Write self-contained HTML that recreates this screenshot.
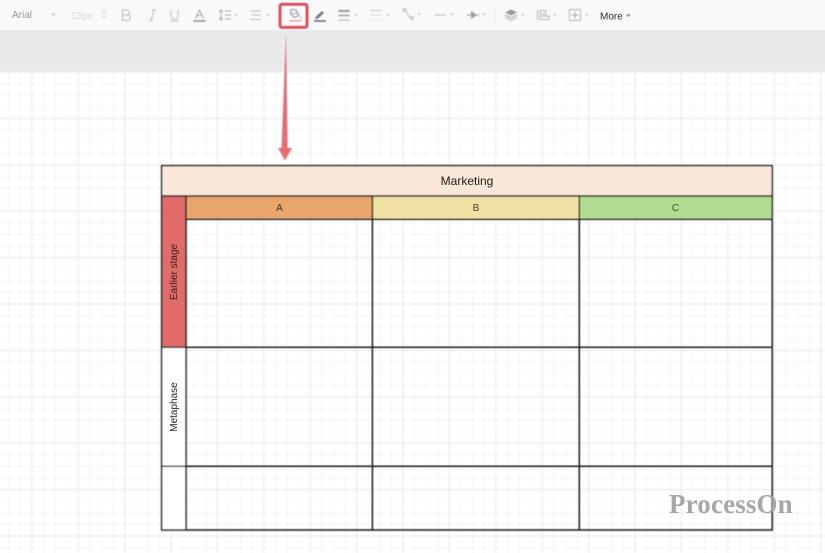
<!DOCTYPE html>
<html><head><meta charset="utf-8">
<style>
html,body{margin:0;padding:0;width:825px;height:553px;overflow:hidden;background:#fff;font-family:"Liberation Sans",sans-serif}
svg{position:absolute;left:0;top:0;display:block}
</style></head>
<body>
<svg width="825" height="553" viewBox="0 0 825 553" xmlns="http://www.w3.org/2000/svg">
<defs>
<pattern id="g" x="8.3" y="2" width="11.6" height="11.6" patternUnits="userSpaceOnUse">
<path d="M.5 0V11.6M0 .5H11.6" stroke="#f3f4f5" stroke-width="1" fill="none"/>
</pattern>
<pattern id="G" x="31.3" y="71.4" width="46.4" height="46.4" patternUnits="userSpaceOnUse">
<path d="M.5 0V46.4M0 .5H46.4" stroke="#ebecee" stroke-width="1.200" fill="none"/>
</pattern>
<filter id="b"><feGaussianBlur stdDeviation="0.4"/></filter>
<filter id="t"><feGaussianBlur stdDeviation="0.2"/></filter>
</defs>
<rect width="825" height="553" fill="#fff"/>
<g filter="url(#b)">
<rect y="71" width="825" height="482" fill="url(#g)"/>
<rect y="71" width="825" height="482" fill="url(#G)"/>
</g>
<rect y="30" width="825" height="41.500" fill="#e8e9eb"/>
<rect width="825" height="30" fill="#f8f9fa"/>
<path d="M0 30.300H825" stroke="#eceded" stroke-width="1"/>

<g filter="url(#b)">
<!-- toolbar icons -->
<path d="M51 13.500l2.500 2.500 2.500-2.500z" fill="#c4c6c8"/>
<path d="M102 12.500l2 -2 2 2zM102 15.500l2 2 2-2z" fill="#c6c8ca"/>
<path d="M122.500 10h4.500a2.500 2.500 0 0 1 0 5h-4.500zM122.500 15h5a2.700 2.700 0 0 1 0 5.400h-5z" fill="none" stroke="#b8babc" stroke-width="1.100"/>
<path d="M149 20.500h4M151 20.500l3-10.500M152 10h4" fill="none" stroke="#b8babc" stroke-width="1"/>
<path d="M171 10v6a3.500 3.500 0 0 0 7 0v-6M170 21h9" stroke="#bcbec0" stroke-width="1" fill="none"/>
<path d="M195.500 18.500l4-8.500 4 8.500M197 15.500h5" fill="none" stroke="#a2a5a7" stroke-width="1"/>
<path d="M193.500 21h12" stroke="#77797c" stroke-width="1.300"/>
<!-- line height -->
<path d="M221 10v10M219 12l2-2 2 2M219 18l2 2 2-2M225 11h6M225 15h6M225 19h6" stroke="#a9acae" stroke-width="1" fill="none"/>
<path d="M233.500 14l2 2 2-2z" fill="#c6c8ca"/>
<!-- align -->
<path d="M250 11h11M252 15h8M250 19.500h11" stroke="#b5b7b9" stroke-width="1" fill="none"/>
<path d="M266 14l2 2 2-2z" fill="#c6c8ca"/>
<!-- fill bucket -->
<path d="M291 9.500l5 .5 3 5.500-4.500 2-4-4z" stroke="#8b8e91" stroke-width="1" fill="#f4f4f4"/>
<path d="M290.500 13.500h8" stroke="#9a9da0" stroke-width=".8"/>
<circle cx="300.500" cy="17.500" r=".8" fill="#8b8e91"/>
<path d="M289.500 20.800h12" stroke="#e58a93" stroke-width="1.200"/>
<rect x="280" y="4.300" width="27" height="23" rx="1.500" fill="none" stroke="#dc4a58" stroke-width="2.800"/>
<!-- pen -->
<path d="M316 16.500l6-5.500 2 2-6 5.500-2.800.8z" fill="#75787b"/>
<path d="M314 21h12" stroke="#6d7073" stroke-width="1.600"/>
<!-- line width -->
<path d="M338.500 11h11" stroke="#8a8d90" stroke-width="1.800"/>
<path d="M338.500 15.500h11" stroke="#989b9d" stroke-width="1.400"/>
<path d="M338.500 20h11" stroke="#aeb0b2" stroke-width="1"/>
<path d="M354 14l2 2 2-2z" fill="#c0c2c4"/>
<!-- dash -->
<path d="M370 10.500h12" stroke="#c3c5c7" stroke-width="1"/>
<path d="M370 15h12" stroke="#c3c5c7" stroke-width="1" stroke-dasharray="2 1"/>
<path d="M370 19.500h12" stroke="#d0d2d3" stroke-width="1" stroke-dasharray="1 1"/>
<path d="M386 14l2 2 2-2z" fill="#c6c8ca"/>
<!-- connector -->
<circle cx="404.500" cy="10" r="1.500" fill="none" stroke="#b4b6b8"/>
<circle cx="412" cy="18" r="1.500" fill="none" stroke="#b4b6b8"/>
<path d="M405.500 11.500c1.500 2 2.500 1.500 2.500 3.500s1.500 1.500 2.500 2" stroke="#b4b6b8" fill="none"/>
<path d="M417 13l2 2 2-2z" fill="#c6c8ca"/>
<!-- line -->
<path d="M435 15h11" stroke="#bcbec0" stroke-width="1.200"/>
<path d="M450 13.500l2 2 2-2z" fill="#c6c8ca"/>
<!-- arrow -->
<path d="M467 15h4" stroke="#a0a3a5" stroke-width="1.200"/>
<path d="M471 11l6 4-6 4z" fill="#9a9da0"/>
<path d="M477 15h2" stroke="#a0a3a5" stroke-width="1.200"/>
<path d="M482 13.500l2 2 2-2z" fill="#c6c8ca"/>
<path d="M494.500 9v14" stroke="#e4e5e6"/>
<!-- layers -->
<path d="M511 9.500l6 3-6 3-6-3z" fill="#93969a"/>
<path d="M505 15l6 3 6-3" stroke="#a8abad" stroke-width="1.200" fill="none"/>
<path d="M505 17.500l6 3 6-3" stroke="#bcbec0" stroke-width="1.200" fill="none"/>
<path d="M521 14l2 2 2-2z" fill="#c6c8ca"/>
<!-- align objects -->
<path d="M537.500 9.500v11" stroke="#b5b7b9" stroke-width="1"/>
<rect x="540" y="10.500" width="6" height="3.500" fill="none" stroke="#b5b7b9"/>
<rect x="540" y="16" width="9" height="3.500" fill="none" stroke="#b5b7b9"/>
<path d="M553 14l2 2 2-2z" fill="#c6c8ca"/>
<!-- grid -->
<rect x="569.500" y="9.500" width="11" height="11" rx="1" fill="none" stroke="#adb0b2"/>
<path d="M575 11.500v7M571.500 15h7" stroke="#a5a8aa"/>
<path d="M585 14l2 2 2-2z" fill="#c6c8ca"/>
<path d="M626 14.500l2.300 2.300 2.300-2.300z" fill="#65686b"/>

<!-- red arrow -->
<path d="M286 33L287.500 148H292L285 160.500 278 148H281.500z" fill="#ec6772"/>

<!-- table fills -->
<rect x="162" y="166" width="610" height="30" fill="#fae7da"/>
<rect x="186" y="196" width="186" height="23" fill="#e9a66c"/>
<rect x="372" y="196" width="207" height="23" fill="#f0e1a4"/>
<rect x="579" y="196" width="193" height="23" fill="#b1dc92"/>
<rect x="162" y="196" width="24" height="151" fill="#e06c6a"/>
<rect x="162" y="347" width="24" height="183" fill="#fff"/>

<!-- table lines -->
<g stroke="#1c1c1c" fill="none" stroke-width="1.500">
<rect x="161.700" y="165.700" width="610.500" height="364.300"/>
<path d="M161.700 196H772.200"/>
<path d="M186 196V530"/>
<path d="M372.400 196V530M579.300 196V530"/>
<path d="M186 219.200H772.200"/>
<path d="M161.700 347.200H772.200M161.700 466.300H772.200"/>
</g>
</g>

<g filter="url(#t)">
<text x="12" y="18" font-size="10" fill="#96999c">Arial</text>
<text x="71" y="19" font-size="10" fill="#d6d8d9">13px</text>
<text x="600" y="19.500" font-size="10" fill="#2c2f32">More</text>
<text x="467" y="185" font-size="12" text-anchor="middle" fill="#1e1a18">Marketing</text>
<text x="279.500" y="211" font-size="10" text-anchor="middle" fill="#46301c">A</text>
<text x="476" y="211" font-size="10" text-anchor="middle" fill="#46412a">B</text>
<text x="675.500" y="211" font-size="10" text-anchor="middle" fill="#35522a">C</text>
<text transform="translate(177 272) rotate(-90)" font-size="10" text-anchor="middle" fill="#3d1e1d">Earlier stage</text>
<text transform="translate(177 407) rotate(-90)" font-size="10" text-anchor="middle" fill="#262626">Metaphase</text>
<text x="669" y="513" font-family="'Liberation Serif',serif" font-weight="bold" font-size="27" fill="#a2a2a2" fill-opacity=".95" letter-spacing=".15">ProcessOn</text>
</g>
</svg>
</body></html>
